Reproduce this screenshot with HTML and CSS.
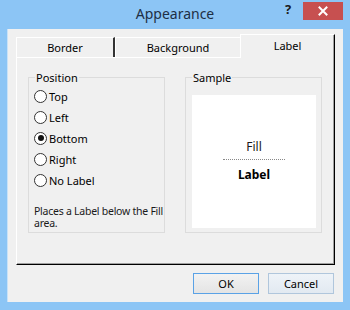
FILE: index.html
```html
<!DOCTYPE html>
<html>
<head>
<meta charset="utf-8">
<link rel="stylesheet" href="styles.css">
</head>
<body>
<div class="window">
  <div class="titlebar">
    <div class="title">Appearance</div>
    <div class="caption-buttons">
      <span class="help">?</span>
      <span class="close">
        <svg width="10" height="10" viewBox="0 0 10 10"><path d="M1.5 1.5 L8.5 8.5 M8.5 1.5 L1.5 8.5" stroke="#fff" stroke-width="2" stroke-linecap="square"/></svg>
      </span>
    </div>
  </div>
  <div class="client">
    <div class="tabs">
      <div class="tab tab-border">Border</div>
      <div class="tab tab-bg">Background</div>
      <div class="tab tab-label active">Label</div>
    </div>
    <div class="panel">
      <div class="group">
        <div class="legend">Position</div>
        <div class="radios">
          <div class="radio"><span class="circle"></span>Top</div>
          <div class="radio"><span class="circle"></span>Left</div>
          <div class="radio"><span class="circle checked"></span>Bottom</div>
          <div class="radio"><span class="circle"></span>Right</div>
          <div class="radio"><span class="circle"></span>No Label</div>
        </div>
        <div class="desc">Places a Label below the Fill area.</div>
      </div>
      <div class="group">
        <div class="legend">Sample</div>
        <div class="sample">
          <div class="fill">Fill</div>
          <div class="dots"></div>
          <div class="lbl">Label</div>
        </div>
      </div>
    </div>
    <div class="buttons">
      <div class="btn ok">OK</div>
      <div class="btn cancel">Cancel</div>
    </div>
  </div>
</div>
</body>
</html>
```
FILE: styles.css
```css
html, body {
  margin: 0;
  padding: 0;
}
body {
  width: 350px;
  height: 310px;
  overflow: hidden;
  font-family: "Noto Sans", "Open Sans", sans-serif;
  font-size: 11px;
  color: #000;
}
.window {
  width: 350px;
  height: 310px;
  box-sizing: border-box;
  background: #8cc5f5;
  padding: 0 7px 8px 7px;
  display: flex;
  flex-direction: column;
}
.titlebar {
  height: 29px;
  position: relative;
  display: flex;
  align-items: center;
  justify-content: center;
}
.title {
  font-size: 14px;
  color: #1e2f45;
  margin-top: -2px;
}
.caption-buttons {
  position: absolute;
  right: 0;
  top: 2px;
  display: flex;
  align-items: center;
}
.help {
  font-weight: bold;
  font-size: 13px;
  color: #1a1a1a;
  width: 26px;
  text-align: center;
  margin-right: 2px;
  margin-top: -4px;
}
.close {
  width: 40px;
  height: 18px;
  background: #c75050;
  display: flex;
  align-items: center;
  justify-content: center;
}
.client {
  flex: 1;
  background: #f0f0f0;
  border-left: 1px solid #c8e2f8;
  padding: 5px 8px 0 8px;
  display: flex;
  flex-direction: column;
}
.tabs {
  display: flex;
  align-items: flex-end;
  height: 23px;
  position: relative;
  z-index: 1;
}
.tab {
  height: 20px;
  box-sizing: border-box;
  display: flex;
  align-items: center;
  justify-content: center;
  border-top: 1px solid #fff;
  border-left: 1px solid #fff;
  padding-bottom: 1px;
}
.tab-border {
  width: 99px;
  border-right: 2px solid #333;
}
.tab-bg {
  width: 125px;
}
.tab-label {
  width: 95px;
  height: 24px;
  margin-bottom: -1px;
  border-right: 1px solid #000;
  box-shadow: inset -1px 0 #a0a0a0;
  background: #f0f0f0;
  padding-bottom: 3px;
}
.panel {
  width: 319px;
  height: 208px;
  box-sizing: border-box;
  border-top: 1px solid #fff;
  border-left: 1px solid #fff;
  border-right: 1px solid #000;
  border-bottom: 1px solid #000;
  box-shadow: inset -1px -1px #a0a0a0;
  padding: 19px 12px 0 11px;
  display: grid;
  grid-template-columns: 137px 137px;
  column-gap: 20px;
  align-items: start;
}
.group {
  height: 156px;
  box-sizing: border-box;
  border: 1px solid #dcdcdc;
  position: relative;
  padding: 11px 5px 0 5px;
}
.legend {
  position: absolute;
  top: -8px;
  left: 6px;
  background: #f0f0f0;
  padding: 0 1px;
  line-height: 15px;
}
.radios {
  display: flex;
  flex-direction: column;
  gap: 7px;
}
.radio {
  display: flex;
  align-items: center;
  height: 14px;
}
.circle {
  width: 11px;
  height: 11px;
  border: 1px solid #333;
  border-radius: 50%;
  background: #fff;
  margin-right: 2px;
  display: flex;
  align-items: center;
  justify-content: center;
}
.circle.checked::after {
  content: "";
  width: 6px;
  height: 6px;
  border-radius: 50%;
  background: #111;
}
.desc {
  margin-top: 18px;
  line-height: 12px;
  color: #1a1a1a;
  width: 142px;
  font-size: 10.5px;
  letter-spacing: -0.25px;
}
.sample {
  background: #fff;
  margin: 6px 0 0 1px;
  height: 133px;
  width: 124px;
  display: flex;
  flex-direction: column;
  align-items: center;
  padding-top: 45px;
  box-sizing: border-box;
  font-size: 12px;
}
.fill {
  line-height: 14px;
  color: #1a1a1a;
}
.dots {
  width: 62px;
  border-top: 1px dotted #888;
  margin-top: 5px;
}
.lbl {
  font-weight: bold;
  margin-top: 8px;
  line-height: 14px;
}
.buttons {
  display: flex;
  justify-content: flex-end;
  gap: 9px;
  margin-top: 8px;
  padding-right: 1px;
}
.btn {
  width: 66px;
  height: 21px;
  box-sizing: border-box;
  display: flex;
  align-items: center;
  justify-content: center;
  background: linear-gradient(#f2f2f2, #e4e4e4);
}
.ok {
  border: 1px solid #5aa2e6;
}
.cancel {
  border: 1px solid #b0c6dc;
  background: linear-gradient(#eef3f8, #e2e9f1);
}
```
